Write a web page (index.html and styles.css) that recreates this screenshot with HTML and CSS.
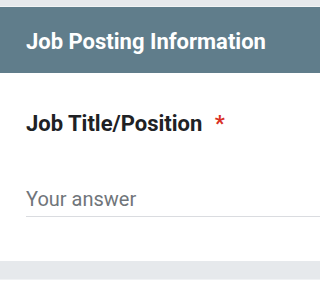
FILE: index.html
```html
<!DOCTYPE html>
<html lang="en">
<head>
<meta charset="utf-8">
<title>Job Posting Information</title>
<link rel="stylesheet" href="styles.css">
</head>
<body>
<div class="page">
  <section class="card">
    <header class="section-header">
      <h1 class="section-title">Job Posting Information</h1>
    </header>
    <div class="question">
      <div class="label">Job Title/Position <span class="required">*</span></div>
      <div class="answer">Your answer</div>
    </div>
  </section>
  <div class="next-card"></div>
</div>
</body>
</html>
```
FILE: styles.css
```css
html, body {
  margin: 0;
  padding: 0;
  background: #e6e9ec;
  overflow: hidden;
}
.page {
  width: 100%;
  height: 288px;
  padding-top: 6px;
  box-sizing: border-box;
  font-family: Roboto, "Noto Sans", Arial, sans-serif;
}
.card {
  background: #ffffff;
  border-top: 1px solid #f2f4f5;
}
.section-header {
  background: #607d8b;
  height: 66px;
  display: flex;
  align-items: center;
  padding: 3px 0 0 26px;
  box-sizing: border-box;
}
.section-title {
  margin: 0;
  color: #ffffff;
  font-size: 22px;
  font-weight: 700;
  line-height: 26px;
  letter-spacing: 0;
}
.question {
  padding: 38px 0 44px 26px;
}
.label {
  font-size: 22px;
  font-weight: 700;
  line-height: 26px;
  color: #202124;
}
.required {
  color: #d93025;
  margin-left: 7px;
}
.answer {
  margin-top: 50px;
  font-size: 20px;
  line-height: 24px;
  color: #70757a;
  padding-bottom: 5px;
  border-bottom: 1px solid #dadce0;
}
.next-card {
  margin-top: 18px;
  height: 20px;
  background: #ffffff;
  border-top: 1px solid #f0f2f4;
}
```
